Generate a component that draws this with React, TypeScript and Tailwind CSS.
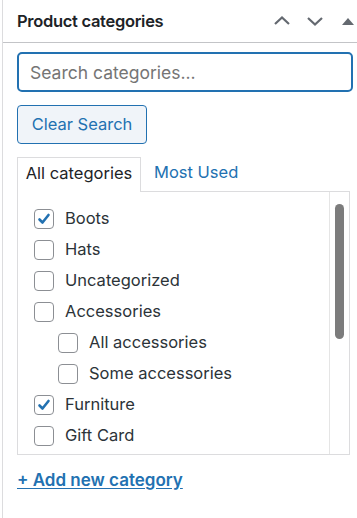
import React, { useState } from "react";

interface Category {
  name: string;
  checked: boolean;
  child?: boolean;
}

const categories: Category[] = [
  { name: "Boots", checked: true },
  { name: "Hats", checked: false },
  { name: "Uncategorized", checked: false },
  { name: "Accessories", checked: false },
  { name: "All accessories", checked: false, child: true },
  { name: "Some accessories", checked: false, child: true },
  { name: "Furniture", checked: true },
  { name: "Gift Card", checked: false },
];

const Checkbox = ({ checked }: { checked: boolean }) => (
  <span className="flex h-[20px] w-[20px] shrink-0 items-center justify-center rounded-[4px] border border-[#8c8f94] bg-white">
    {checked && (
      <svg width="16" height="16" viewBox="0 0 16 16" fill="none">
        <path
          d="M3.5 8.5 L6.5 11.5 L12.5 4"
          stroke="#2271b1"
          strokeWidth="2.6"
          strokeLinecap="round"
          strokeLinejoin="round"
        />
      </svg>
    )}
  </span>
);

const App = () => {
  const [items] = useState<Category[]>(categories);

  return (
    <div className="h-[518px] w-[357px] overflow-hidden bg-white font-['Inter',sans-serif] text-[#2c3338]">
      <div className="ml-[2px] h-full border-l border-[#dcdcde]">
        {/* header */}
        <div className="flex h-[43px] items-center justify-between border-b border-[#c3c4c7] pl-[14px]">
          <h2 className="text-[16.5px] font-semibold tracking-[-0.3px] text-[#1d2327]">Product categories</h2>
          <div className="flex items-center">
            <button className="flex w-[33px] justify-center">
              <svg width="20" height="20" viewBox="0 0 20 20" fill="none">
                <path d="M3 13 L10 6.5 L17 13" stroke="#646970" strokeWidth="2.2" />
              </svg>
            </button>
            <button className="flex w-[33px] justify-center">
              <svg width="20" height="20" viewBox="0 0 20 20" fill="none">
                <path d="M3 7 L10 13.5 L17 7" stroke="#646970" strokeWidth="2.2" />
              </svg>
            </button>
            <button className="flex w-[26px] justify-start pl-[10px]">
              <svg width="14" height="12" viewBox="0 0 14 12">
                <path d="M1 10 L7 3 L13 10 Z" fill="#646970" />
              </svg>
            </button>
          </div>
        </div>

        <div className="pl-[14px] pr-[3px]">
          {/* search */}
          <div className="mt-[9px]">
            <input
              type="text"
              placeholder="Search categories..."
              className="h-[40px] w-[336px] rounded-[5px] border-2 border-[#2271b1] px-[11px] text-[17.5px] text-[#2c3338] outline-none placeholder:text-[#757575]"
            />
          </div>

          <button className="mt-[13px] flex h-[39px] w-[130px] items-center justify-center rounded-[4px] border border-[#2271b1] bg-[#f0f4f9] text-[16.5px] text-[#2271b1]">
            Clear Search
          </button>

          {/* tabs */}
          <div className="mt-[13px] flex items-start">
            <div className="relative z-10 -mb-px flex h-[35px] w-[124px] items-center justify-center border border-b-0 border-[#dcdcde] bg-white pb-[3px] text-[16.5px] text-[#1d2327]">
              All categories
            </div>
            <a href="#" className="flex h-[34px] items-center px-[13px] pb-[3px] text-[16.5px] text-[#2271b1]">
              Most Used
            </a>
          </div>

          {/* list */}
          <div className="flex h-[264px] w-[333px] border border-[#dcdcde]">
            <ul className="flex-1 overflow-hidden pl-[16px] pt-[11px]">
              {items.map((item) => (
                <li
                  key={item.name}
                  className={`flex h-[31px] items-center gap-[11px] text-[16.5px] text-[#2c3338] ${item.child ? "pl-[24px]" : ""}`}
                >
                  <Checkbox checked={item.checked} />
                  <span>{item.name}</span>
                </li>
              ))}
              <li className="flex h-[31px] items-center">
                <Checkbox checked={false} />
              </li>
            </ul>
            <div className="flex w-[20px] justify-center border-l border-[#e5e5e5] pt-[12px]">
              <div className="h-[135px] w-[9px] rounded-full bg-[#7c7c7c]" />
            </div>
          </div>

          <a
            href="#"
            className="mt-[13px] inline-block text-[17px] font-semibold text-[#2271b1] underline underline-offset-2"
          >
            + Add new category
          </a>
        </div>
      </div>
    </div>
  );
};

export default App;
